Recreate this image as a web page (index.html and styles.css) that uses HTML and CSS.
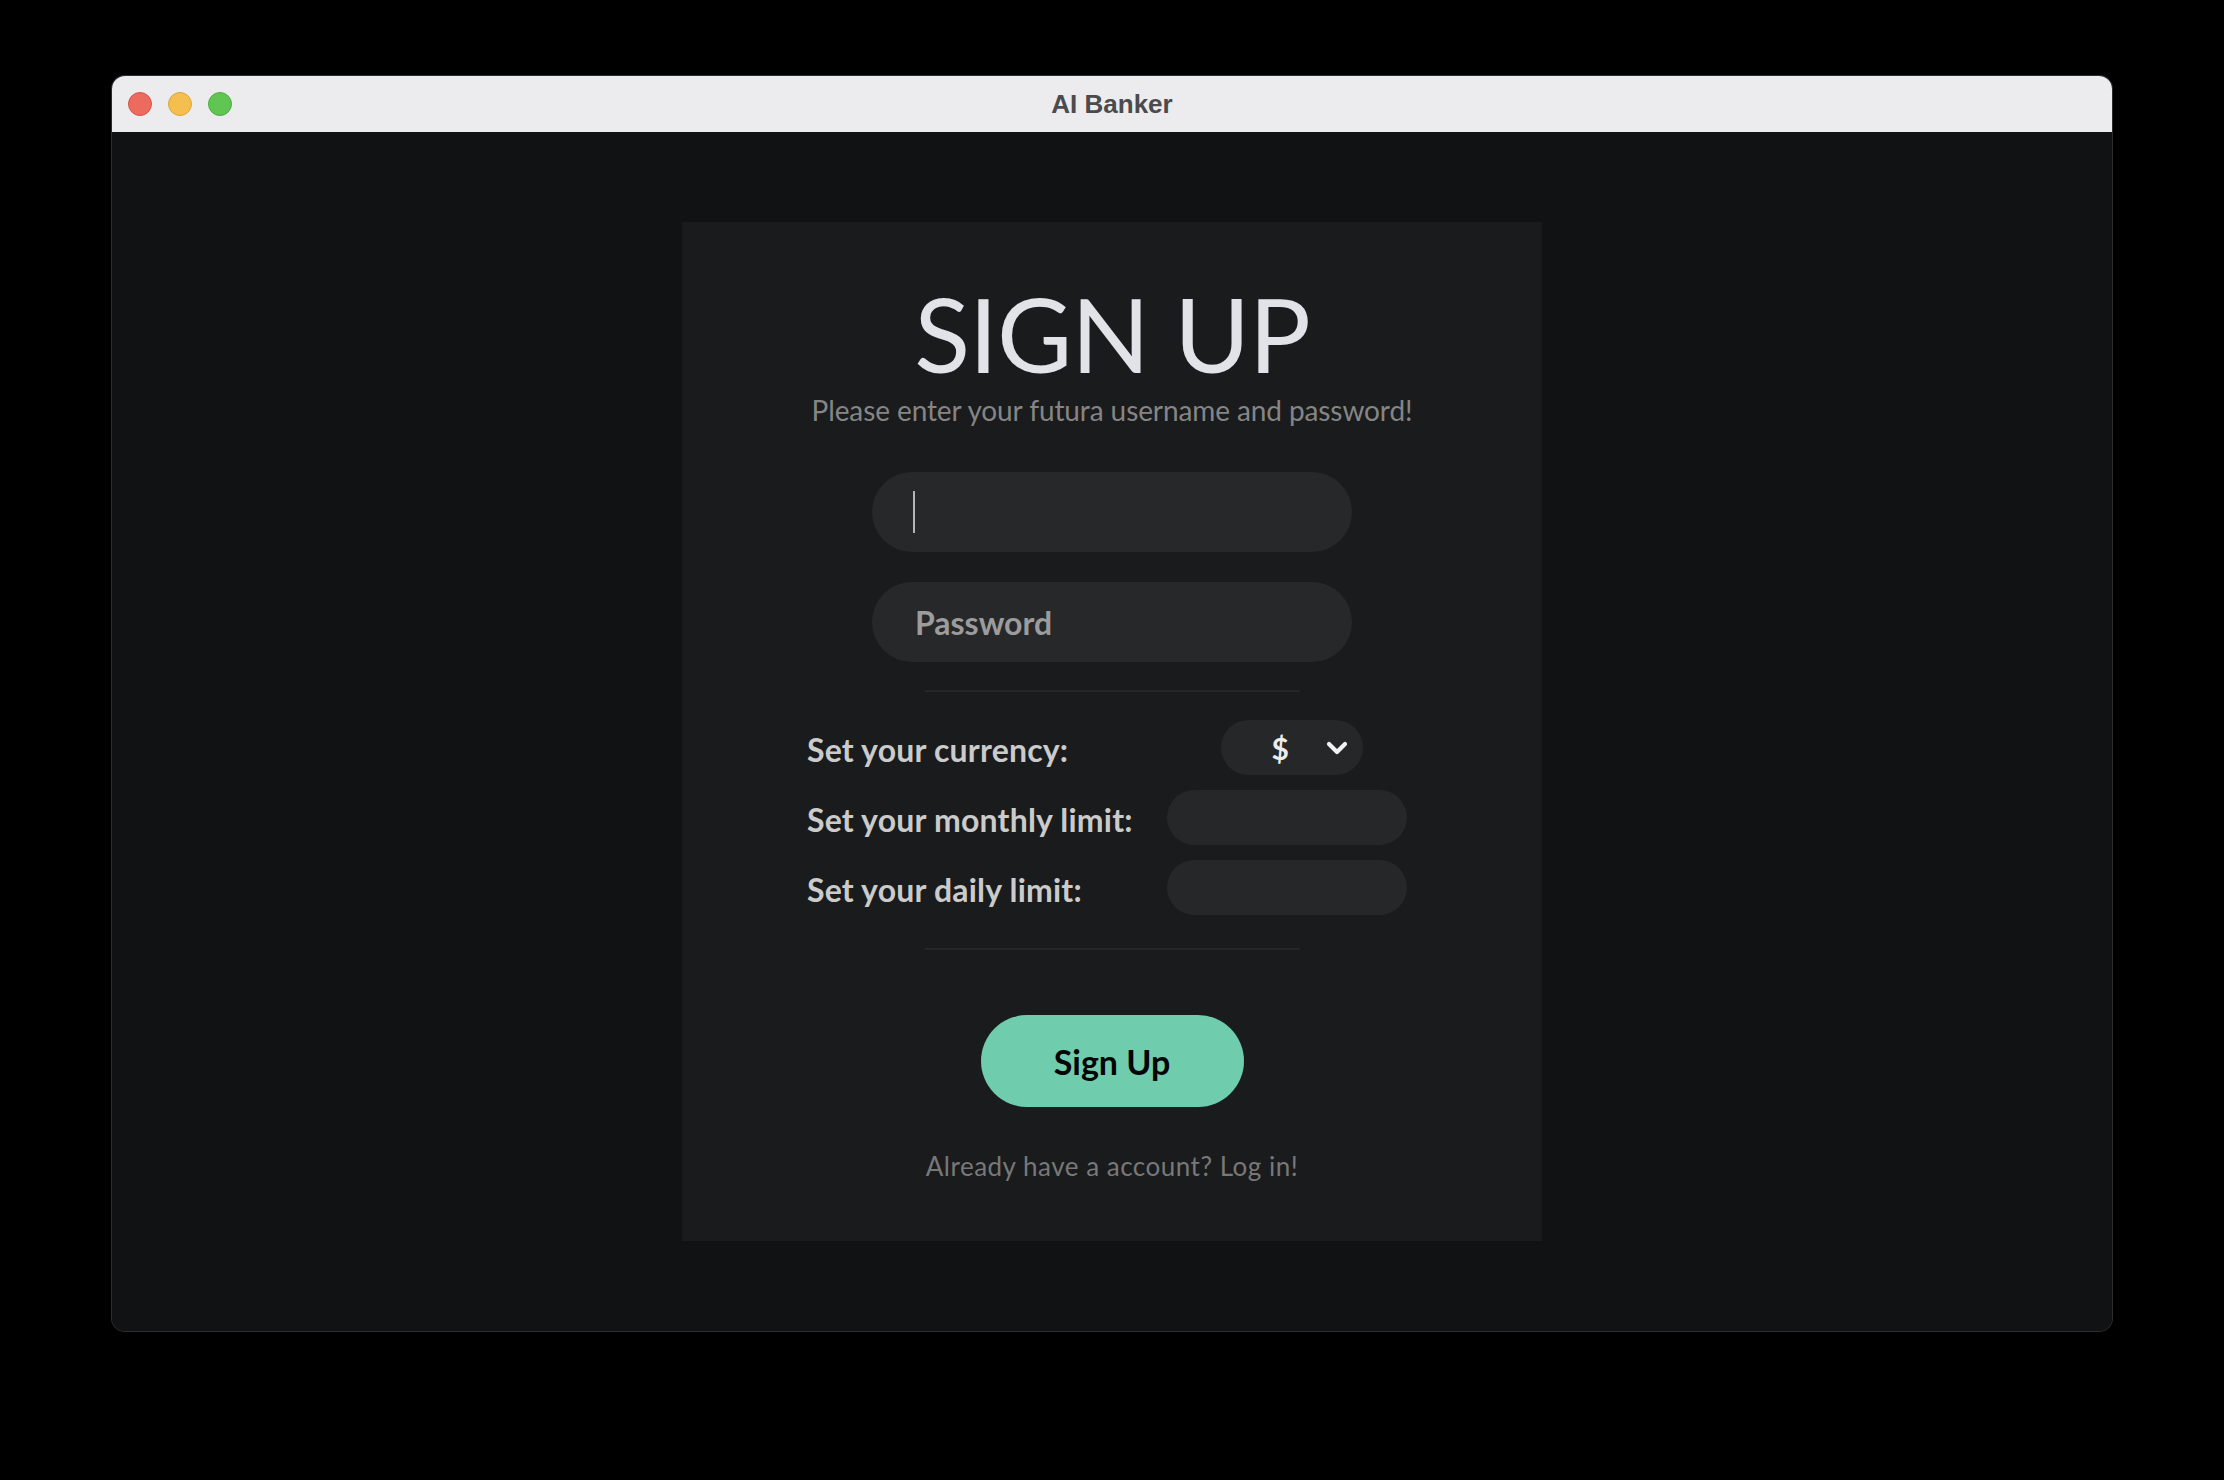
FILE: index.html
```html
<!DOCTYPE html>
<html lang="en">
<head>
<meta charset="utf-8">
<title>AI Banker</title>
<link rel="stylesheet" href="styles.css">
</head>
<body>
<div class="window">
  <div class="titlebar">
    <div class="lights">
      <span class="light red"></span>
      <span class="light yellow"></span>
      <span class="light green"></span>
    </div>
    <div class="title">AI Banker</div>
    <div class="spacer"></div>
  </div>
  <div class="content">
    <div class="card">
      <h1 class="heading">SIGN UP</h1>
      <p class="subtitle">Please enter your futura username and password!</p>
      <div class="field field-first"><span class="caret"></span></div>
      <div class="field field-second"><span class="placeholder">Password</span></div>
      <div class="divider divider-top"></div>
      <div class="settings">
        <div class="row">
          <span class="label">Set your currency:</span>
          <div class="select">
            <span class="currency">$</span>
            <svg class="chevron" width="22" height="14" viewBox="0 0 22 14"><path d="M3 3 L11 11 L19 3" fill="none" stroke="#f2f2f2" stroke-width="4.2" stroke-linecap="round" stroke-linejoin="round"/></svg>
          </div>
        </div>
        <div class="row">
          <span class="label">Set your monthly limit:</span>
          <div class="small-field"></div>
        </div>
        <div class="row">
          <span class="label">Set your daily limit:</span>
          <div class="small-field"></div>
        </div>
      </div>
      <div class="divider divider-bottom"></div>
      <div class="button">Sign Up</div>
      <p class="login">Already have a account? Log in!</p>
    </div>
  </div>
</div>
</body>
</html>
```
FILE: styles.css
```css
html, body {
  margin: 0;
  padding: 0;
  background: #000;
}
body {
  width: 2224px;
  height: 1480px;
  overflow: hidden;
  font-family: "Lato", "Open Sans", sans-serif;
}
.window {
  margin: 76px 0 0 112px;
  width: 2000px;
  height: 1255px;
  border-radius: 13px;
  overflow: hidden;
  display: flex;
  flex-direction: column;
  box-shadow: 0 0 0 1px #2e2f31;
}
.titlebar {
  height: 56px;
  flex: 0 0 56px;
  background: #ececee;
  display: grid;
  grid-template-columns: 1fr auto 1fr;
  align-items: center;
}
.lights {
  display: flex;
  gap: 16px;
  padding-left: 16px;
}
.light {
  width: 24px;
  height: 24px;
  border-radius: 50%;
  box-sizing: border-box;
}
.red { background: #ed6a5e; border: 1px solid #d75448; }
.yellow { background: #f5bf4f; border: 1px solid #dba53b; }
.green { background: #61c554; border: 1px solid #4cae40; }
.title {
  font-family: "Liberation Sans", Arial, sans-serif;
  font-weight: 700;
  font-size: 26px;
  color: #4b4b4d;
  line-height: 52px;
}
.content {
  flex: 1;
  background: #111213;
  display: flex;
  align-items: center;
  justify-content: center;
}
.card {
  width: 860px;
  height: 1019px;
  box-sizing: border-box;
  background: #1a1b1c;
  display: flex;
  flex-direction: column;
  align-items: center;
  padding-top: 59px;
}
.heading {
  margin: 0;
  font-size: 103px;
  line-height: 104px;
  font-weight: 400;
  color: #e1e3e9;
  letter-spacing: -1px;
}
.subtitle {
  margin: 8px 0 0;
  font-size: 28px;
  line-height: 34px;
  color: #858585;
  font-weight: 400;
  letter-spacing: -0.1px;
}
.field {
  width: 480px;
  height: 80px;
  border-radius: 40px;
  background: #27282a;
  display: flex;
  align-items: center;
  padding-left: 41px;
  box-sizing: border-box;
}
.field-first { margin-top: 45px; }
.field-second { margin-top: 30px; padding-left: 43px; }
.caret {
  width: 2px;
  height: 42px;
  background: #b5b5b5;
}
.placeholder {
  font-size: 32px;
  color: #9c9c9c;
  font-weight: 700;
}
.divider {
  width: 375px;
  height: 2px;
  background: #252628;
}
.divider-top { margin-top: 28px; }
.divider-bottom { margin-top: 33px; }
.settings {
  align-self: flex-start;
  margin-left: 125px;
  margin-top: 28px;
  width: 600px;
  display: flex;
  flex-direction: column;
  gap: 15px;
}
.row {
  height: 55px;
  display: grid;
  grid-template-columns: 1fr 240px;
  align-items: center;
}
.label {
  font-size: 32px;
  color: #cbcbcb;
  font-weight: 700;
  letter-spacing: 0.2px;
  padding-top: 4px;
}
.select {
  width: 142px;
  height: 55px;
  margin-left: 54px;
  border-radius: 28px;
  background: #262729;
  display: flex;
  align-items: center;
  justify-content: flex-end;
  gap: 37px;
  padding-right: 15px;
  box-sizing: border-box;
}
.currency {
  font-size: 30px;
  font-weight: 700;
  color: #ececec;
}
.chevron { display: block; }
.small-field {
  width: 240px;
  height: 55px;
  border-radius: 28px;
  background: #262729;
}
.button {
  margin-top: 65px;
  width: 263px;
  height: 92px;
  border-radius: 46px;
  background: #6fcdae;
  color: #050505;
  font-size: 34px;
  font-weight: 700;
  display: flex;
  align-items: center;
  justify-content: center;
}
.login {
  margin: 43px 0 0;
  font-size: 26px;
  line-height: 32px;
  color: #787878;
  letter-spacing: 0.5px;
}
```
